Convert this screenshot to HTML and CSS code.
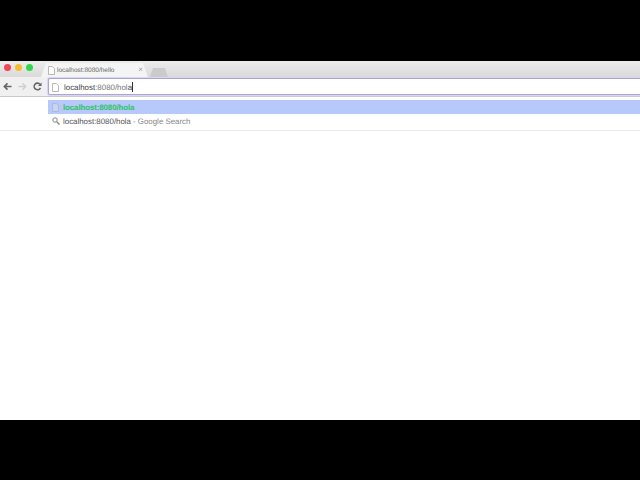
FILE: index.html
```html
<!DOCTYPE html>
<html lang="en">
<head>
  <meta charset="UTF-8">
  <title>localhost:8080/hello</title>
  <link rel="stylesheet" href="styles.css">
</head>
<body>
  <div class="browser">
    <div class="tabstrip">
      <div class="lights">
        <span class="light red"></span>
        <span class="light yellow"></span>
        <span class="light green"></span>
      </div>
      <div class="tab">
        <svg class="page-icon" width="7" height="9" viewBox="0 0 8 10"><path d="M.5.5h4.500l2.500 2.500v6.500h-7z" fill="#fff" stroke="#aaa"/></svg>
        <span class="tab-title">localhost:8080/hello</span>
        <span class="tab-close">×</span>
      </div>
      <div class="new-tab"></div>
    </div>

    <div class="toolbar">
      <div class="nav">
        <svg width="9" height="9" viewBox="0 0 10 10"><path d="M9.500 5H2M5 1.500L1.500 5 5 8.500" fill="none" stroke="#666" stroke-width="1.800"/></svg>
        <svg width="9" height="9" viewBox="0 0 10 10"><path d="M.5 5H8M5 1.500L8.500 5 5 8.500" fill="none" stroke="#cfcfcf" stroke-width="1.600"/></svg>
        <svg width="9" height="9" viewBox="0 0 10 10"><path d="M8.300 6.500A3.700 3.700 0 1 1 7.800 2.600" fill="none" stroke="#666" stroke-width="1.700"/><path d="M9.500.5v4h-4z" fill="#666"/></svg>
      </div>
      <div class="omnibox">
        <svg class="page-icon" width="7" height="9" viewBox="0 0 8 10"><path d="M.5.5h4.500l2.500 2.500v6.500h-7z" fill="#fff" stroke="#aaa"/></svg>
        <span class="url">localhost<span class="url-rest">:8080/hol</span>a</span><span class="caret"></span>
      </div>
    </div>

    <div class="suggestions">
      <div class="row selected">
        <svg class="page-icon" width="7" height="9" viewBox="0 0 8 10"><path d="M.5.5h4.500l2.500 2.500v6.500h-7z" fill="#c8d4f0" stroke="#a5b6e0"/></svg>
        <span class="match">localhost:8080/hola</span>
      </div>
      <div class="row">
        <svg class="search-icon" width="8" height="8" viewBox="0 0 8 8"><circle cx="3" cy="3" r="2.200" fill="none" stroke="#888"/><path d="M4.700 4.700L7.500 7.500" stroke="#888" stroke-width="1.300"/></svg>
        <span class="query">localhost:8080/hola</span>
        <span class="hint">- Google Search</span>
      </div>
    </div>

    <div class="page"></div>
  </div>
</body>
</html>
```
FILE: styles.css
```css
html, body {
  margin: 0;
  height: 100%;
  background: #000;
}

.browser {
  margin-top: 61px;
  height: 359px;
  display: flex;
  flex-direction: column;
  background: #fff;
  font-family: "Liberation Sans", Arial, sans-serif;
  text-rendering: geometricPrecision;
  overflow: hidden;
}

.tabstrip {
  height: 16px;
  display: flex;
  align-items: flex-end;
  background: linear-gradient(#ececec, #dadada);
}

.lights {
  display: flex;
  gap: 4px;
  align-self: flex-start;
  padding: 3px 0 0 4px;
  width: 37px;
}

.light {
  width: 7px;
  height: 7px;
  border-radius: 50%;
}

.red { background: #f2455a; }
.yellow { background: #f5bd2e; }
.green { background: #2fd84a; }

.tab {
  width: 107px;
  height: 14px;
  padding: 0 5px 0 7px;
  box-sizing: border-box;
  display: flex;
  align-items: center;
  gap: 2px;
  background: #f4f4f4;
  clip-path: polygon(0 100%, 5px 0, 102px 0, 100% 100%);
}

.tab-title {
  flex: 1;
  font-size: 6.500px;
  color: #666;
  white-space: nowrap;
}

.tab-close {
  font-size: 8px;
  line-height: 8px;
  color: #999;
}

.new-tab {
  width: 18px;
  height: 9px;
  margin-left: 2px;
  background: #cbcbcb;
  clip-path: polygon(0 100%, 3px 0, 15px 0, 100% 100%);
}

.toolbar {
  height: 20px;
  display: flex;
  align-items: center;
  background: #f0f0f0;
  border-bottom: 1px solid #c8c8c8;
  box-sizing: border-box;
}

.nav {
  width: 48px;
  display: flex;
  gap: 6px;
  padding-left: 3px;
  box-sizing: border-box;
}

.omnibox {
  flex: 1;
  height: 17px;
  display: flex;
  align-items: center;
  padding: 1px 0 0 3px;
  box-sizing: border-box;
  background: #fff;
  border: 1px solid #a9a5d6;
  border-right: none;
  border-radius: 2px 0 0 2px;
  box-shadow: 0 0 0 1px #d9d7ee;
}

.omnibox .page-icon { margin-right: 5px; }

.url {
  font-size: 7.900px;
  color: #444;
}

.url-rest { color: #777; }

.caret {
  width: 1px;
  height: 10px;
  background: #333;
}

.suggestions {
  padding: 3px 0 2px 48px;
  border-bottom: 1px solid #ececec;
  box-shadow: 0 1px 2px #f0f0f0;
}

.row {
  height: 14px;
  display: flex;
  align-items: center;
  gap: 4px;
  padding-left: 4px;
  font-size: 7.900px;
}

.selected { background: #b7c9fb; }

.selected .page-icon { margin-right: 1px; }

.match {
  font-weight: bold;
  color: #2cc463;
  margin-left: -1px;
  letter-spacing: -0.100px;
}

.query { color: #555; margin-left: -1px; }
.hint { color: #888; margin-left: -2px; }

.page {
  flex: 1;
  background: #fff;
}
```
